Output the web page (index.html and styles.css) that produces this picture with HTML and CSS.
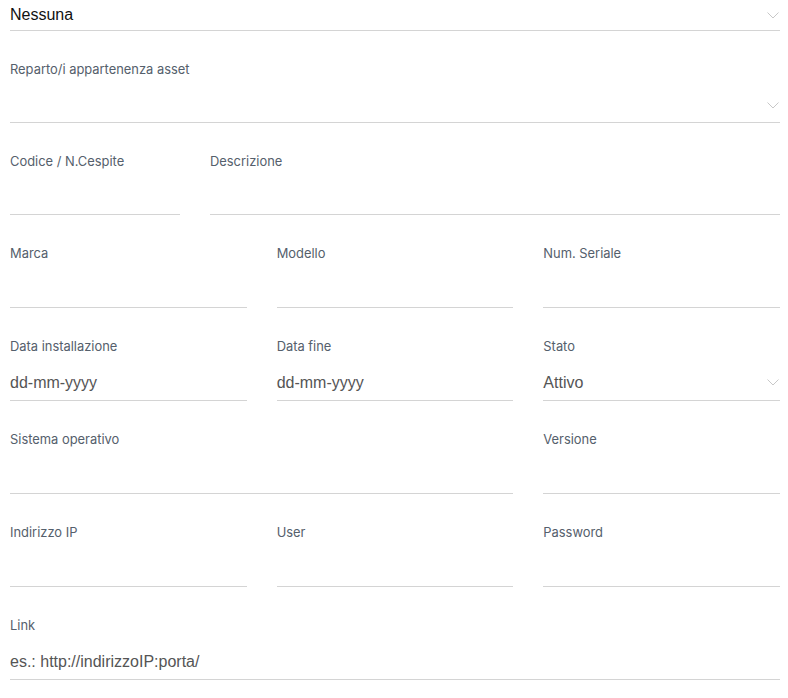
FILE: index.html
```html
<!DOCTYPE html>
<html lang="it">
<head>
<meta charset="utf-8">
<title>Asset</title>
<link rel="stylesheet" href="styles.css">
</head>
<body>
<form class="form">
  <div class="row row-1">
    <div class="field">
      <div class="control select first"><span class="value dark">Nessuna</span><svg class="chev" viewBox="0 0 12 7"><path d="M0.5 0.5 L6 6 L11.5 0.5"/></svg></div>
    </div>
  </div>
  <div class="row row-1">
    <div class="field">
      <label class="label">Reparto/i appartenenza asset</label>
      <div class="control select short"><span class="value"></span><svg class="chev" viewBox="0 0 12 7"><path d="M0.5 0.5 L6 6 L11.5 0.5"/></svg></div>
    </div>
  </div>
  <div class="row row-code">
    <div class="field">
      <label class="label">Codice / N.Cespite</label>
      <div class="control short"></div>
    </div>
    <div class="field">
      <label class="label">Descrizione</label>
      <div class="control short"></div>
    </div>
  </div>
  <div class="row row-3">
    <div class="field">
      <label class="label">Marca</label>
      <div class="control"></div>
    </div>
    <div class="field">
      <label class="label">Modello</label>
      <div class="control"></div>
    </div>
    <div class="field">
      <label class="label">Num. Seriale</label>
      <div class="control"></div>
    </div>
  </div>
  <div class="row row-3">
    <div class="field">
      <label class="label">Data installazione</label>
      <div class="control"><span class="value">dd-mm-yyyy</span></div>
    </div>
    <div class="field">
      <label class="label">Data fine</label>
      <div class="control"><span class="value">dd-mm-yyyy</span></div>
    </div>
    <div class="field">
      <label class="label">Stato</label>
      <div class="control select"><span class="value">Attivo</span><svg class="chev" viewBox="0 0 12 7"><path d="M0.5 0.5 L6 6 L11.5 0.5"/></svg></div>
    </div>
  </div>
  <div class="row row-3">
    <div class="field span-2">
      <label class="label">Sistema operativo</label>
      <div class="control"></div>
    </div>
    <div class="field">
      <label class="label">Versione</label>
      <div class="control"></div>
    </div>
  </div>
  <div class="row row-3">
    <div class="field">
      <label class="label">Indirizzo IP</label>
      <div class="control"></div>
    </div>
    <div class="field">
      <label class="label">User</label>
      <div class="control"></div>
    </div>
    <div class="field">
      <label class="label">Password</label>
      <div class="control"></div>
    </div>
  </div>
  <div class="row row-1">
    <div class="field">
      <label class="label">Link</label>
      <div class="control"><span class="value">es.: http://indirizzoIP:porta/</span></div>
    </div>
  </div>
</form>
</body>
</html>
```
FILE: styles.css
```css
html, body {
  margin: 0;
  padding: 0;
  background: #ffffff;
}
.form {
  margin: 0 8px 0 10px;
  display: flex;
  flex-direction: column;
}
.row {
  display: grid;
  column-gap: 30px;
}
.row-1 { grid-template-columns: 1fr; }
.row-code { grid-template-columns: 170px 1fr; }
.row-3 { grid-template-columns: 1fr 1fr 1fr; }
.span-2 { grid-column: span 2; }
.field {
  display: flex;
  flex-direction: column;
}
.label {
  margin-top: 31px;
  margin-bottom: 7px;
  font-family: Inter, "Noto Sans", sans-serif;
  font-size: 12.9px;
  line-height: 16px;
  color: #55606c;
}
.control {
  box-sizing: border-box;
  height: 39px;
  padding-top: 3px;
  border-bottom: 1px solid #d4d4d4;
  display: flex;
  align-items: center;
  justify-content: space-between;
  font-family: "Liberation Sans", Arial, sans-serif;
  font-size: 16px;
  color: #555555;
}
.control.short {
  height: 38px;
}
.control.first {
  height: 31px;
  padding-top: 0;
}
.value.dark {
  color: #111111;
}
.chev {
  width: 12px;
  height: 7px;
  margin-right: 1px;
  fill: none;
  stroke: #c8c8c8;
  stroke-width: 1;
}
```
